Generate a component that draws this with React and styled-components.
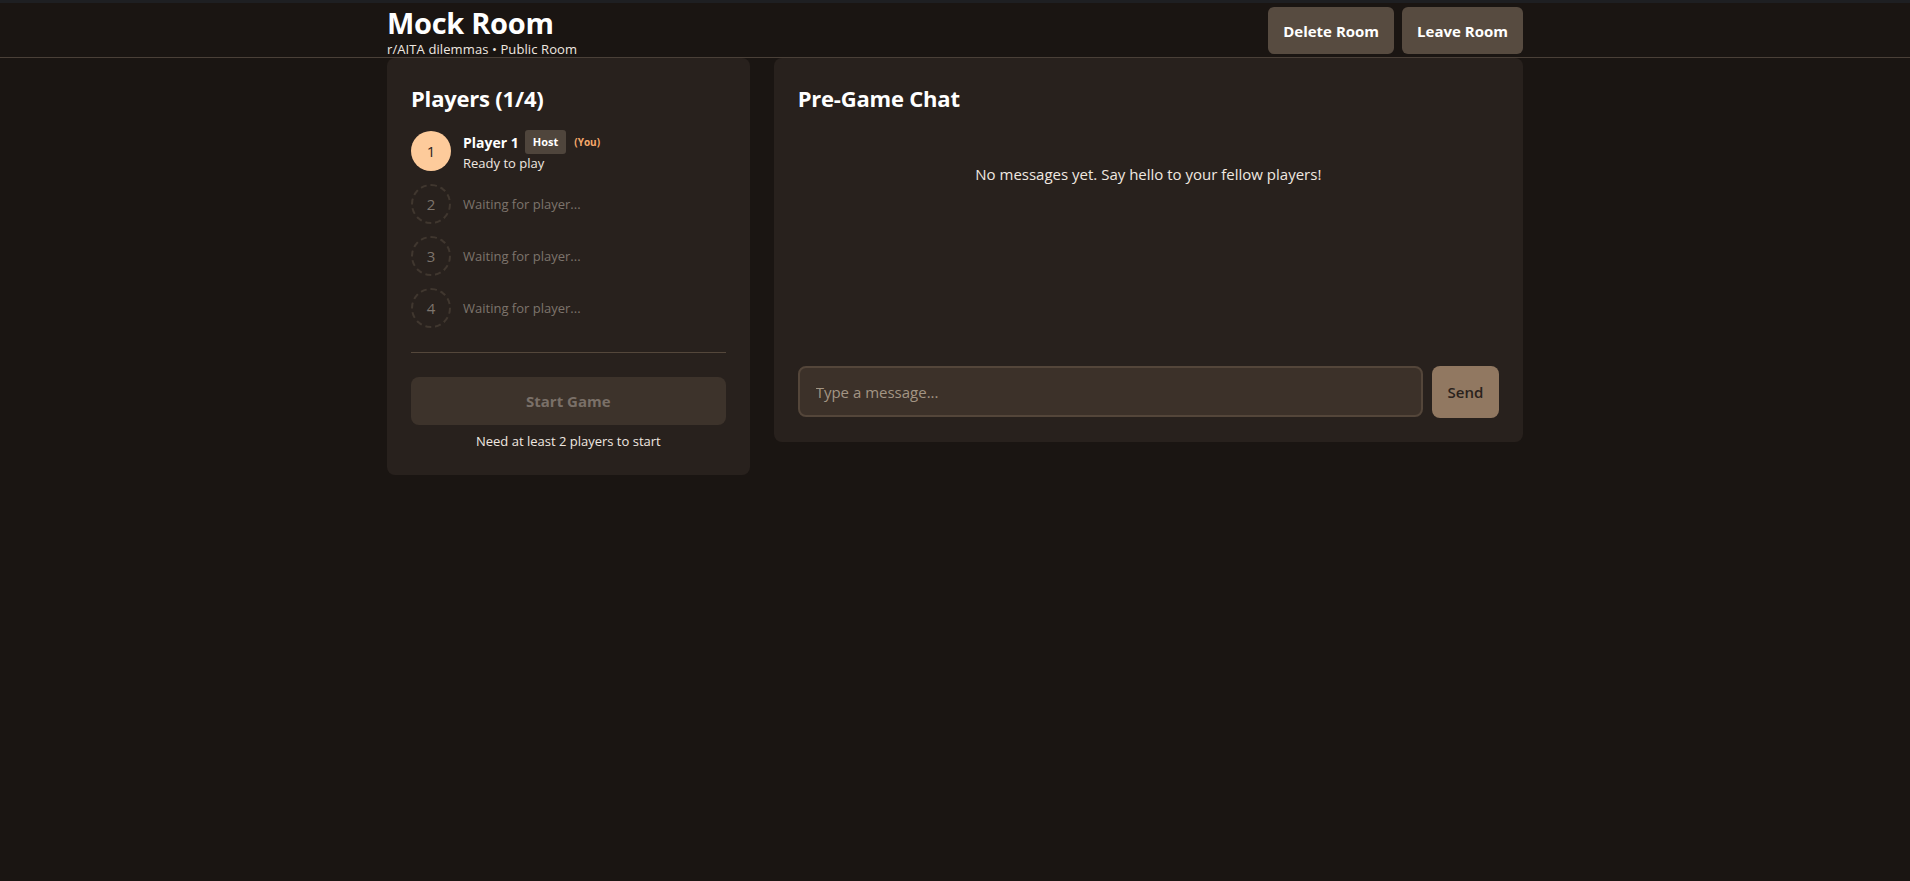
import React from 'react';
import styled, {createGlobalStyle} from 'styled-components';

const GlobalStyle = createGlobalStyle`
  html, body {
    margin: 0;
    padding: 0;
    background: #1a1512;
    color: #f4ece4;
    font-family: "Open Sans", "Noto Sans", sans-serif;
  }
  * { box-sizing: border-box; }
`;

const Page = styled.div`
  min-height: 100vh;
  background: #1a1512;
  border-top: 3px solid #1e1f22;
`;

const Header = styled.header`
  border-bottom: 1px solid #4a4038;
`;

const Inner = styled.div`
  width: 1136px;
  margin: 0 auto;
`;

const HeaderRow = styled(Inner)`
  display: flex;
  align-items: center;
  justify-content: space-between;
  padding: 1px 0 0;
  height: 54px;
`;

const TitleBlock = styled.div`
  display: flex;
  flex-direction: column;
`;

const Title = styled.h1`
  margin: 0;
  font-size: 29px;
  line-height: 36px;
  font-weight: 700;
  color: #ffffff;
  letter-spacing: -0.3px;
`;

const Subtitle = styled.div`
  font-size: 13px;
  line-height: 16px;
  letter-spacing: 0.1px;
  color: #f0e8e0;
`;

const Actions = styled.div`
  display: flex;
  gap: 8px;
`;

const HeaderButton = styled.button`
  height: 47px;
  padding: 0 15px;
  border: 0;
  border-radius: 6px;
  background: #574b40;
  color: #ffffff;
  font-family: inherit;
  font-size: 15px;
  font-weight: 700;
  cursor: pointer;
`;

const Grid = styled(Inner)`
  display: grid;
  grid-template-columns: repeat(3, 1fr);
  gap: 24px;
  align-items: start;
`;

const Panel = styled.section`
  background: #28211d;
  border-radius: 8px;
  padding: 24px;
  grid-column: span ${p => p.span || 1};
`;

const PanelTitle = styled.h2`
  margin: 0 0 16px;
  font-size: 22px;
  line-height: 32px;
  font-weight: 700;
  color: #ffffff;
  letter-spacing: -0.2px;
`;

const PlayerList = styled.div`
  display: flex;
  flex-direction: column;
  gap: 12px;
`;

const PlayerRow = styled.div`
  display: flex;
  align-items: center;
  gap: 12px;
  min-height: 40px;
`;

const Avatar = styled.div`
  flex: 0 0 40px;
  width: 40px;
  height: 40px;
  border-radius: 50%;
  display: flex;
  align-items: center;
  justify-content: center;
  font-size: 15px;
  background: ${p => p.empty ? 'transparent' : '#fdcb9b'};
  color: ${p => p.empty ? '#7d746c' : '#2a221c'};
  border: ${p => p.empty ? '2px dashed #40372f' : '0'};
`;

const PlayerInfo = styled.div`
  display: flex;
  flex-direction: column;
`;

const NameLine = styled.div`
  display: flex;
  align-items: center;
  gap: 6px;
  height: 24px;
`;

const Name = styled.span`
  font-size: 14px;
  font-weight: 700;
  color: #ffffff;
`;

const Badge = styled.span`
  background: #4f453c;
  color: #ffffff;
  font-size: 11px;
  font-weight: 700;
  border-radius: 3px;
  padding: 0 8px;
  height: 24px;
  line-height: 24px;
`;

const You = styled.span`
  color: #f6a86a;
  font-size: 10px;
  font-weight: 700;
  margin-left: 2px;
`;

const Status = styled.div`
  font-size: 13px;
  line-height: 18px;
  color: ${p => p.muted ? '#7d746c' : '#f0e8e0'};
`;

const Footer = styled.div`
  margin-top: 24px;
  padding-top: 24px;
  border-top: 1px solid #54473b;
`;

const StartButton = styled.button`
  width: 100%;
  height: 48px;
  border: 0;
  border-radius: 8px;
  background: #3d332b;
  color: #7a7068;
  font-family: inherit;
  font-size: 15px;
  font-weight: 700;
  cursor: not-allowed;
`;

const Hint = styled.p`
  margin: 6px 0 0;
  text-align: center;
  font-size: 13px;
  line-height: 20px;
  color: #f0e8e0;
`;

const Messages = styled.div`
  height: 220px;
  margin-bottom: 16px;
  padding: 32px 0;
  text-align: center;
  font-size: 15px;
  line-height: 24px;
  color: #f0e8e0;
`;

const InputRow = styled.form`
  display: flex;
  gap: 9px;
`;

const MessageInput = styled.input`
  flex: 1;
  height: 51px;
  padding: 0 16px;
  border: 2px solid #54463a;
  border-radius: 8px;
  background: #3c3129;
  color: #f4ece4;
  font-family: inherit;
  font-size: 15px;
  outline: none;
  &::placeholder { color: #a39584; }
`;

const SendButton = styled.button`
  width: 67px;
  height: 52px;
  border: 0;
  border-radius: 8px;
  background: #917861;
  color: #2a221c;
  font-family: inherit;
  font-size: 15px;
  font-weight: 600;
`;

const players = [
  {n: 1, name: 'Player 1'},
  {n: 2},
  {n: 3},
  {n: 4},
];

export default function App() {
  return <Page>
    <GlobalStyle/>
    <Header>
      <HeaderRow>
        <TitleBlock>
          <Title>Mock Room</Title>
          <Subtitle>r/AITA dilemmas • Public Room</Subtitle>
        </TitleBlock>
        <Actions>
          <HeaderButton>Delete Room</HeaderButton>
          <HeaderButton>Leave Room</HeaderButton>
        </Actions>
      </HeaderRow>
    </Header>
    <Grid>
      <Panel>
        <PanelTitle>Players (1/4)</PanelTitle>
        <PlayerList>
          {players.map(p => p.name ?
            <PlayerRow key={p.n}>
              <Avatar>{p.n}</Avatar>
              <PlayerInfo>
                <NameLine>
                  <Name>{p.name}</Name>
                  <Badge>Host</Badge>
                  <You>(You)</You>
                </NameLine>
                <Status>Ready to play</Status>
              </PlayerInfo>
            </PlayerRow> :
            <PlayerRow key={p.n}>
              <Avatar empty>{p.n}</Avatar>
              <Status muted>Waiting for player...</Status>
            </PlayerRow>
          )}
        </PlayerList>
        <Footer>
          <StartButton disabled>Start Game</StartButton>
          <Hint>Need at least 2 players to start</Hint>
        </Footer>
      </Panel>
      <Panel span={2}>
        <PanelTitle>Pre-Game Chat</PanelTitle>
        <Messages>No messages yet. Say hello to your fellow players!</Messages>
        <InputRow onSubmit={e => e.preventDefault()}>
          <MessageInput placeholder="Type a message..."/>
          <SendButton type="submit">Send</SendButton>
        </InputRow>
      </Panel>
    </Grid>
  </Page>;
}
